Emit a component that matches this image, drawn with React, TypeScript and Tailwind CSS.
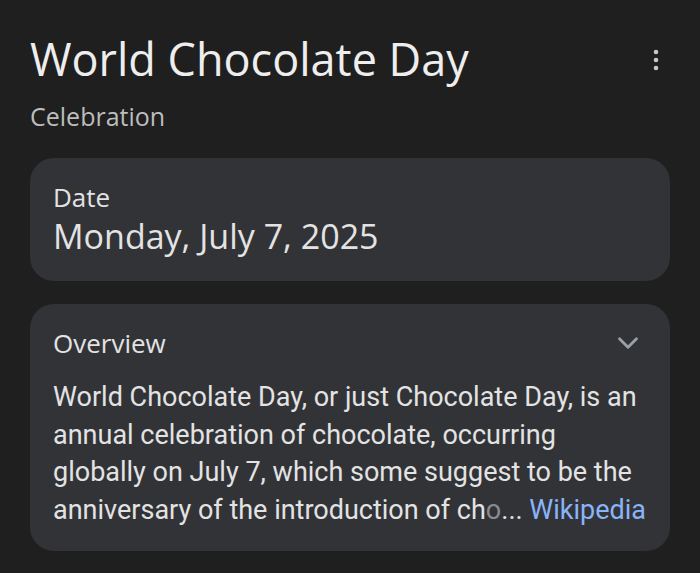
import { ChevronDown } from "lucide-react";

function MoreIcon() {
  return (
    <svg width="24" height="24" viewBox="0 0 24 24" fill="#c4c7d0">
      <circle cx="12" cy="4" r="2.3" />
      <circle cx="12" cy="12" r="2.3" />
      <circle cx="12" cy="20" r="2.3" />
    </svg>
  );
}

export default function App() {
  return (
    <div className="h-[573px] w-[700px] overflow-hidden bg-[#1f1f1f] px-[30px] pt-[31px] font-['Roboto',sans-serif] text-[#e3e3e3]">
      <div className="flex items-start justify-between">
        <h1 className="font-['Open_Sans',sans-serif] text-[45px] leading-[56px] text-[#eeeeee]">World Chocolate Day</h1>
        <div className="mr-[2px] mt-[17px]">
          <MoreIcon />
        </div>
      </div>
      <p className="mt-[14px] font-['Open_Sans',sans-serif] text-[25px] leading-[30px] text-[#bdbdbd]">Celebration</p>

      <div className="mt-[27px] rounded-[24px] bg-[#323337] px-[23px] pb-[24px] pt-[24px] font-['Open_Sans',sans-serif]">
        <div className="text-[26px] leading-[30px]">Date</div>
        <div className="mt-[3px] text-[34px] leading-[42px]">Monday, July 7, 2025</div>
      </div>

      <div className="mt-[23px] rounded-[24px] bg-[#323337] px-[23px] pb-[22px] pt-[23px]">
        <div className="flex h-[32px] items-center justify-between">
          <div className="font-['Open_Sans',sans-serif] text-[26px] leading-[32px]">Overview</div>
          <ChevronDown className="mr-[2px] h-[34px] w-[34px] text-[#9aa0a6]" strokeWidth={2} />
        </div>
        <p className="mt-[20px] whitespace-nowrap text-[27px] leading-[37.5px]">
          World Chocolate Day, or just Chocolate Day, is an
          <br />
          annual celebration of chocolate, occurring
          <br />
          globally on July 7, which some suggest to be the
          <br />
          anniversary of the introduction of ch<span className="text-[#8a8b8f]">o</span>...{" "}
          <span className="text-[#8ab4f8]">Wikipedia</span>
        </p>
      </div>
    </div>
  );
}
